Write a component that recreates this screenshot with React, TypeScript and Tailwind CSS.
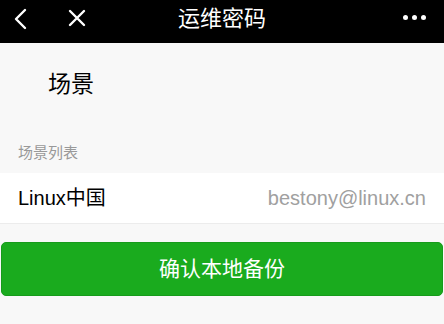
import React from 'react';

const font = { fontFamily: '"Liberation Sans", "Noto Sans CJK SC", sans-serif' };

const App = () => {
  return (
    <div className="w-[444px] h-[324px] bg-[#f8f8f8] overflow-hidden" style={font}>
      {/* Top bar */}
      <div className="relative h-[43px] bg-black flex items-center">
        <svg className="absolute left-[12px] top-[8px]" width="18" height="22" viewBox="0 0 18 22">
          <path d="M13 2 L4 11 L13 20" fill="none" stroke="white" strokeWidth="2.4" strokeLinecap="round" strokeLinejoin="round" />
        </svg>
        <svg className="absolute left-[67px] top-[8px]" width="20" height="20" viewBox="0 0 20 20">
          <path d="M3 3 L17 17 M17 3 L3 17" fill="none" stroke="white" strokeWidth="2.4" strokeLinecap="round" />
        </svg>
        <div className="w-full text-center text-white text-[22px] leading-none pb-[5px]">运维密码</div>
        <div className="absolute right-[18px] top-[15px] flex gap-[4px]">
          <span className="w-[5px] h-[5px] rounded-full bg-white" />
          <span className="w-[5px] h-[5px] rounded-full bg-white" />
          <span className="w-[5px] h-[5px] rounded-full bg-white" />
        </div>
      </div>

      {/* Scene */}
      <div className="pl-[48px] pt-[30px] h-[90px] text-[23px] leading-none text-black">场景</div>

      {/* Section label */}
      <div className="pl-[18px] h-[40px] pt-[12px] text-[15px] leading-none text-[#999999]">场景列表</div>

      {/* List row */}
      <div className="h-[51px] bg-white border-b border-[#ececec] flex items-center justify-between px-[18px]">
        <span className="text-[20px] text-black">Linux中国</span>
        <span className="text-[20px] text-[#a0a0a0]">bestony@linux.cn</span>
      </div>

      {/* Button */}
      <div className="pt-[18px] px-[1px]">
        <button className="w-full h-[54px] rounded-[5px] bg-[#1aab1e] border border-[#179b1b] text-white text-[21px] flex items-center justify-center">
          确认本地备份
        </button>
      </div>
    </div>
  );
};

export default App;
